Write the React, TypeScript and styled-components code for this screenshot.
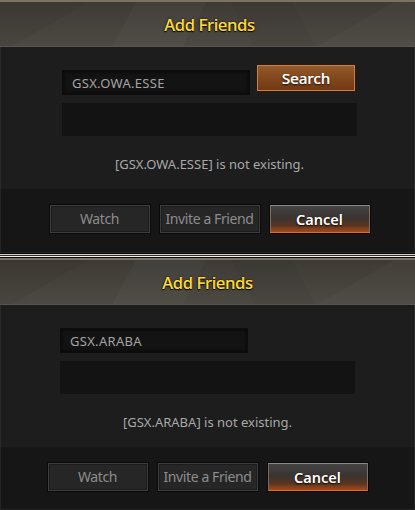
import React from "react";
import styled, { createGlobalStyle } from "styled-components";

const Global = createGlobalStyle`
  html, body { margin: 0; padding: 0; background: #111; }
  body { width: 415px; height: 510px; overflow: hidden; font-family: "Noto Sans", "DejaVu Sans", sans-serif; }
`;

const Page = styled.div`
  width: 415px;
  display: flex;
  flex-direction: column;
`;

const Dialog = styled.section<{ $h: number }>`
  height: ${(p) => p.$h}px;
  display: flex;
  flex-direction: column;
  background: #161616;
  box-shadow: inset 1px 0 0 #262626, inset -1px 0 0 #262626;
`;

const Header = styled.header<{ $shift: number }>`
  height: 45px;
  flex: none;
  border-top: 2px solid #7b7264;
  display: flex;
  align-items: center;
  justify-content: center;
  padding-left: ${(p) => p.$shift * 2}px;
  background:
    linear-gradient(118deg, transparent 0 31%, rgba(255,255,255,0.022) 31% 47%, transparent 47%),
    linear-gradient(62deg, transparent 0 58%, rgba(0,0,0,0.04) 58% 72%, transparent 72%),
    linear-gradient(150deg, rgba(0,0,0,0.05) 0 18%, transparent 18% 80%, rgba(255,255,255,0.02) 80%),
    linear-gradient(180deg, #3e3b36 0%, #47433d 60%, #4d4943 100%);
  box-shadow: inset 0 -1px 0 #58534b;
`;

const Title = styled.h1`
  margin: 0;
  font-size: 16.5px;
  font-weight: 500;
  color: #ffdc3c;
  letter-spacing: -0.3px;
  text-shadow: 0 1px 1px #000, 0 0 2px rgba(0,0,0,0.9), 0.3px 0 0 #ffdc3c;
`;

const Body = styled.div<{ $shift: number }>`
  height: 142px;
  flex: none;
  background: #1d1d1d;
  display: flex;
  justify-content: center;
  padding-left: ${(p) => p.$shift * 2}px;
  box-shadow: inset 1px 0 0 #2a2a2a, inset -1px 0 0 #2a2a2a;
`;

const Content = styled.div`
  width: 295px;
  padding-top: 18px;
  display: flex;
  flex-direction: column;
`;

const SearchRow = styled.div`
  height: 30px;
  display: flex;
  align-items: flex-start;
  gap: 7px;
`;

const Input = styled.div`
  margin-top: 5px;
  width: 188px;
  height: 25px;
  box-sizing: border-box;
  background: #131313;
  border: 1px solid #0d0d0d;
  box-shadow: inset 0 0 4px rgba(0,0,0,0.9);
  padding-left: 9px;
  display: flex;
  align-items: center;
  font-size: 13px;
  color: #a3a3a3;
  letter-spacing: 0.3px;
`;

const SearchButton = styled.button`
  width: 98px;
  height: 26px;
  box-sizing: border-box;
  border: 1px solid #d07f3f;
  background: linear-gradient(180deg, #935a2a 0%, #80461c 55%, #723812 100%);
  color: #fff;
  font-family: inherit;
  font-size: 15px;
  font-weight: 500;
  padding: 0 0 1px;
  text-shadow: 0 1px 2px rgba(0,0,0,0.9), 0.3px 0 0 #fff;
`;

const ResultBox = styled.div`
  margin-top: 8px;
  height: 33px;
  background: #131313;
`;

const Message = styled.p`
  margin: 18px 0 0;
  height: 20px;
  line-height: 20px;
  text-align: center;
  font-size: 13px;
  color: #a8a8a8;
  white-space: nowrap;
`;

const Footer = styled.footer<{ $shift: number }>`
  flex: 1;
  background: #161616;
  display: flex;
  justify-content: center;
  align-items: flex-start;
  gap: 10px;
  padding-top: 16px;
  padding-left: ${(p) => p.$shift * 2}px;
  box-shadow: inset 1px 0 0 #242424, inset -1px 0 0 #242424, inset 0 -1px 0 #222;
`;

const FooterButton = styled.button<{ $primary?: boolean }>`
  width: 100px;
  height: 28px;
  box-sizing: border-box;
  padding: 0 0 1px;
  font-family: inherit;
  font-size: 14px;
  white-space: nowrap;
  outline: 1px solid #0a0a0a;
  ${(p) =>
    p.$primary
      ? `
    border: 1px solid #8a8a8a;
    border-bottom-color: #e46a26;
    border-left-color: #7a6e66;
    border-right-color: #7a6e66;
    background: linear-gradient(180deg, #444 0%, #3a3431 45%, #5a3420 75%, #a44a18 100%);
    color: #fff;
    font-weight: 600;
    font-size: 14.5px;
    text-shadow: 0 1px 2px #000;
  `
      : `
    border: 1px solid #3e3e3e;
    background: #262626;
    color: #8c8c8c;
    letter-spacing: -0.4px;
    box-shadow: inset 0 0 0 1px #1c1c1c;
  `}
`;

const Divider = styled.div`
  height: 5px;
  flex: none;
  background: linear-gradient(
    180deg,
    #0a0a0a 0 1px,
    #cfcfcf 1px 2px,
    #3a2a22 2px 3px,
    #efefef 3px 4px,
    #0b0b0b 4px 5px
  );
`;

type DialogProps = { h: number; shift: number; name: string; search?: boolean };

function AddFriends({ h, shift, name, search }: DialogProps) {
  return (
    <Dialog $h={h}>
      <Header $shift={shift}>
        <Title>Add Friends</Title>
      </Header>
      <Body $shift={shift}>
        <Content>
          <SearchRow>
            <Input>{name}</Input>
            {search && <SearchButton>Search</SearchButton>}
          </SearchRow>
          <ResultBox />
          <Message>[{name}] is not existing.</Message>
        </Content>
      </Body>
      <Footer $shift={shift}>
        <FooterButton>Watch</FooterButton>
        <FooterButton>Invite a Friend</FooterButton>
        <FooterButton $primary>Cancel</FooterButton>
      </Footer>
    </Dialog>
  );
}

export default function App() {
  return (
    <Page>
      <Global />
      <AddFriends h={253} shift={2} name="GSX.OWA.ESSE" search />
      <Divider />
      <AddFriends h={252} shift={0} name="GSX.ARABA" />
    </Page>
  );
}
